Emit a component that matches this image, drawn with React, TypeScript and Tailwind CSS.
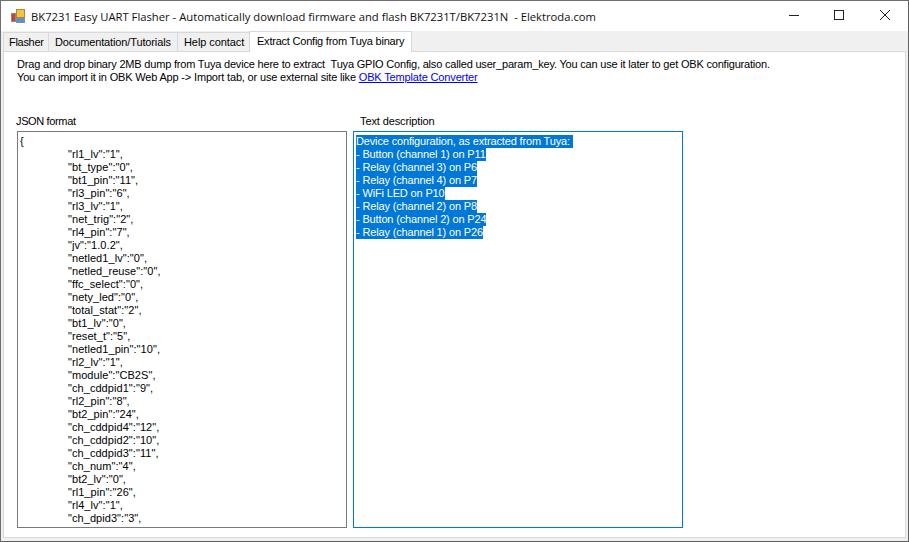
const jsonLines = [
  '"rl1_lv":"1",',
  '"bt_type":"0",',
  '"bt1_pin":"11",',
  '"rl3_pin":"6",',
  '"rl3_lv":"1",',
  '"net_trig":"2",',
  '"rl4_pin":"7",',
  '"jv":"1.0.2",',
  '"netled1_lv":"0",',
  '"netled_reuse":"0",',
  '"ffc_select":"0",',
  '"nety_led":"0",',
  '"total_stat":"2",',
  '"bt1_lv":"0",',
  '"reset_t":"5",',
  '"netled1_pin":"10",',
  '"rl2_lv":"1",',
  '"module":"CB2S",',
  '"ch_cddpid1":"9",',
  '"rl2_pin":"8",',
  '"bt2_pin":"24",',
  '"ch_cddpid4":"12",',
  '"ch_cddpid2":"10",',
  '"ch_cddpid3":"11",',
  '"ch_num":"4",',
  '"bt2_lv":"0",',
  '"rl1_pin":"26",',
  '"rl4_lv":"1",',
  '"ch_dpid3":"3",',
];

const textLines = [
  "Device configuration, as extracted from Tuya: ",
  "- Button (channel 1) on P11",
  "- Relay (channel 3) on P6",
  "- Relay (channel 4) on P7",
  "- WiFi LED on P10",
  "- Relay (channel 2) on P8",
  "- Button (channel 2) on P24",
  "- Relay (channel 1) on P26",
];

function AppIcon() {
  return (
    <svg width="16" height="16" viewBox="0 0 16 16" className="shrink-0">
      <rect x="6.5" y="1.5" width="8" height="8" fill="#f3c440" stroke="#a8893a" />
      <rect x="1.5" y="5.5" width="4" height="8" fill="#c8402f" stroke="#8a8a8a" />
      <rect x="6.5" y="10.5" width="8" height="4" fill="#5a8fd8" stroke="#7a8fb0" />
    </svg>
  );
}

function Tab({ label, className }: { label: string; className: string }) {
  return (
    <div className={`flex h-[20px] items-center whitespace-nowrap border border-[#d9d9d9] bg-[#f0f0f0] pt-px ${className}`}>
      {label}
    </div>
  );
}

export default function App() {
  return (
    <div className="flex h-[542px] w-[909px] flex-col overflow-hidden border border-t-[#6e6e6e] border-r-[#5f5f5f] border-b-[#5f5f5f] border-l-[#6e6e6e] bg-[#f0f0f0] font-['Liberation_Sans',sans-serif] text-[11px] leading-[13px] text-black">
      <header className="flex h-[30px] shrink-0 items-center bg-white pl-[9px]">
        <AppIcon />
        <span className="ml-[5px] whitespace-pre font-['Open_Sans',sans-serif] text-[11.25px] text-[#111]">
          BK7231 Easy UART Flasher - Automatically download firmware and flash BK7231T/BK7231N  - Elektroda.com
        </span>
        <div className="ml-auto flex items-center">
          <svg width="46" height="30" viewBox="0 0 46 30">
            <path d="M19 14.5h10" stroke="#222" />
          </svg>
          <svg width="46" height="30" viewBox="0 0 46 30">
            <rect x="18.5" y="9.5" width="9" height="9" fill="none" stroke="#222" />
          </svg>
          <svg width="46" height="30" viewBox="0 0 46 30">
            <path d="M18 9l10 10M28 9l-10 10" stroke="#222" />
          </svg>
        </div>
      </header>

      <div className="flex min-h-0 flex-1 flex-col px-[2px] pb-[3px]">
        <nav className="relative z-10 -mb-px flex h-[21px] shrink-0 items-end">
          <Tab label="Flasher" className="w-[46px] pl-[5px] tracking-[-0.3px]" />
          <Tab label="Documentation/Tutorials" className="-ml-px w-[130px] pl-[6px] tracking-[-0.13px]" />
          <Tab label="Help contact" className="-ml-px w-[73px] pl-[6px] tracking-[-0.08px]" />
          <div className="-ml-px flex h-[21px] w-[163px] items-start whitespace-nowrap border border-b-0 border-[#d9d9d9] bg-white pt-[3px] pl-[7px] tracking-[-0.22px]">
            Extract Config from Tuya binary
          </div>
        </nav>

        <main className="flex min-h-0 flex-1 flex-col border border-[#d9d9d9] bg-white pt-[6px] pl-[13px]">
          <p className="tracking-[-0.19px]">Drag and drop binary 2MB dump from Tuya device here to extract&nbsp; Tuya GPIO Config, also called user_param_key. You can use it later to get OBK configuration.</p>
          <p className="tracking-[-0.17px]">
            You can import it in OBK Web App -&gt; Import tab, or use external site like{" "}
            <a className="tracking-[-0.15px] text-[#0000ff] underline">OBK Template Converter</a>
          </p>

          <div className="mt-[31px] flex gap-[6px]">
            <section className="w-[330px]">
              <div className="-ml-px mb-[3px] h-[13px] tracking-[-0.36px]">JSON format</div>
              <div className="h-[397px] overflow-hidden border border-[#7a7a7a] pt-[3px] pl-[2px]">
                <div>{"{"}</div>
                {jsonLines.map((line) => (
                  <div key={line} className="pl-[48px] whitespace-pre tracking-[0.06px]">{line}</div>
                ))}
              </div>
            </section>
            <section className="w-[330px]">
              <div className="mb-[3px] ml-[7px] h-[13px] tracking-[-0.12px]">Text description</div>
              <div className="flex h-[397px] flex-col items-start overflow-hidden border border-[#0078d7] pt-[3px] pl-[2px]">
                {textLines.map((line) => (
                  <div key={line} className="bg-[#0078d7] whitespace-pre tracking-[-0.15px] text-white">{line}</div>
                ))}
              </div>
            </section>
          </div>
        </main>
      </div>
    </div>
  );
}
